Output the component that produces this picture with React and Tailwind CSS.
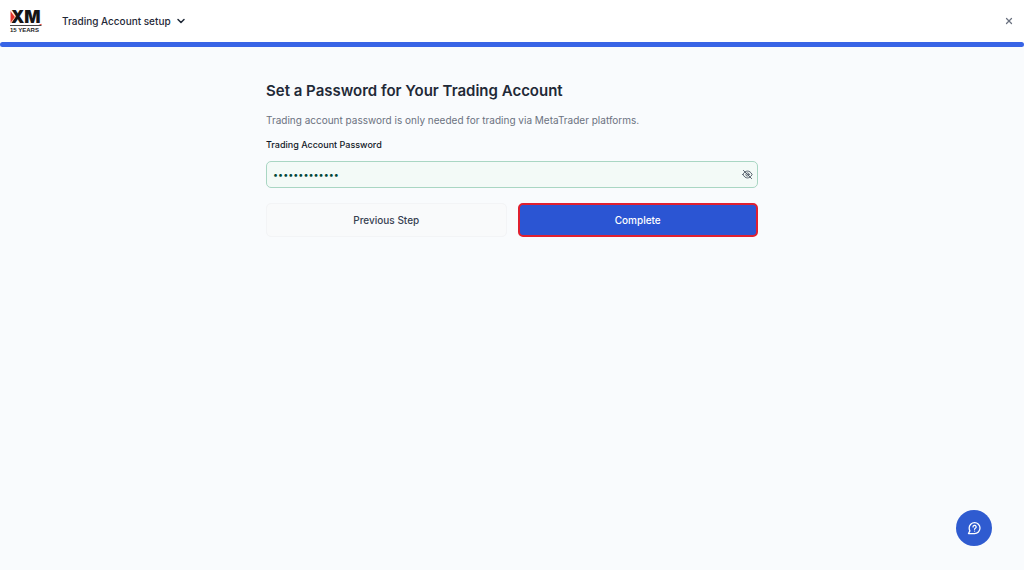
import { useState } from "react";
import { ChevronDown, X } from "lucide-react";

function Logo() {
  return (
    <svg viewBox="0 0 32 26" className="h-[26px] w-8 overflow-visible" role="img" aria-label="XM 15 Years">
      <text x="1" y="15.300" fontFamily="Inter, sans-serif" fontWeight="900" fontSize="17" fill="#151515">
        XM
      </text>
      <path d="M0.3 2.600 L5.200 9 L0.3 15.400 Z" fill="#e3342b" stroke="#fff" strokeWidth="0.4" />
      <path d="M0 17.500 H31.500" stroke="#333" strokeWidth="0.9" />
      <path d="M28.500 17 L31.500 15.800 V17 Z" fill="#e3342b" />
      <text x="0" y="24" fontFamily="'Liberation Sans', sans-serif" fontWeight="700" fontSize="6" fill="#222">
        15 YEARS
      </text>
    </svg>
  );
}

function EyeOffIcon() {
  return (
    <svg viewBox="0 0 24 24" className="size-[11px]" fill="none" stroke="currentColor" strokeWidth="2" strokeLinecap="round" strokeLinejoin="round" aria-hidden="true">
      <path d="M2 12 C4.500 7 8 4.500 12 4.500 S19.500 7 22 12 C19.500 17 16 19.500 12 19.500 S4.500 17 2 12 Z" />
      <circle cx="12" cy="12" r="3.500" />
      <path d="M3 3 L21 21" />
    </svg>
  );
}

function HelpIcon() {
  return (
    <svg viewBox="0 0 24 24" className="size-[14px]" fill="none" stroke="currentColor" strokeWidth="2.2" strokeLinecap="round" strokeLinejoin="round" aria-hidden="true">
      <path d="M2.500 21.500 H13 A9.300 9.300 0 1 0 3.700 12.200 C3.700 14 4.200 15.700 5 17 Z" />
      <path d="M10.300 10.200 a2.700 2.700 0 1 1 4 2.300 c-.9.500-1.300.9-1.300 1.700" />
      <path d="M13 17.200 h.01" />
    </svg>
  );
}

export default function App() {
  const [password, setPassword] = useState("Trading#2024x");
  const [visible, setVisible] = useState(false);

  return (
    <div className="flex min-h-screen flex-col bg-[#f9fbfd] font-['Inter',sans-serif] text-[#1f2937]">
      <header className="flex h-[42px] items-center justify-between bg-white px-2.5">
        <div className="flex items-center gap-5">
          <Logo />
          <button type="button" className="flex items-center gap-1 text-[10px] leading-4 font-medium">
            Trading Account setup
            <ChevronDown className="size-3" strokeWidth={3} />
          </button>
        </div>
        <button type="button" aria-label="Close" className="text-[#6b7280]">
          <X className="size-2.5" strokeWidth={3} />
        </button>
      </header>
      <div className="h-[5px] rounded-full bg-[#3864e6]" />

      <main className="mx-auto w-full max-w-[492px] pt-8">
        <h1 className="text-[15px] leading-6 font-semibold">Set a Password for Your Trading Account</h1>
        <p className="mt-[7px] text-[10px] leading-5 text-[#6b7280]">
          Trading account password is only needed for trading via MetaTrader platforms.
        </p>
        <form onSubmit={(e) => e.preventDefault()}>
          <label htmlFor="password" className="mt-[7px] block text-[9px] leading-4 font-medium text-[#111827]">
            Trading Account Password
          </label>
          <div className="mt-2 flex h-[27px] items-center rounded-[5px] border border-[#a9d6c3] bg-[#f3faf7] pr-1 pl-1.5">
            <input
              id="password"
              type={visible ? "text" : "password"}
              value={password}
              onChange={(e) => setPassword(e.target.value)}
              className="min-w-0 flex-1 bg-transparent text-[9px] leading-4 text-[#014737] outline-none"
            />
            <button type="button" aria-label="Toggle password visibility" onClick={() => setVisible(!visible)} className="text-[#4b5563]">
              <EyeOffIcon />
            </button>
          </div>
          <div className="mt-[15px] grid grid-cols-2 gap-[11px] text-[10px] leading-4 font-medium">
            <button type="button" className="h-[34px] rounded-[5px] border border-[#f3f4f6] bg-[#f9fafb] text-[#374151]">
              Previous Step
            </button>
            <button type="submit" className="h-[34px] rounded-[5px] border-2 border-[#e02030] bg-[#2b55d3] text-white">
              Complete
            </button>
          </div>
        </form>
      </main>

      <button type="button" aria-label="Help" className="fixed right-8 bottom-6 flex size-9 items-center justify-center rounded-full bg-[#2f5bd0] text-white">
        <HelpIcon />
      </button>
    </div>
  );
}
